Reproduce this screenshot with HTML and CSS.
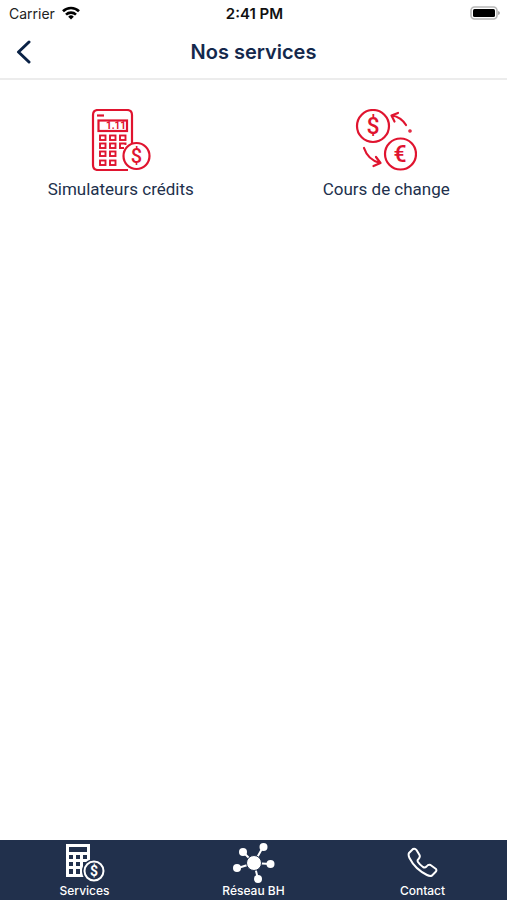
FILE: index.html
```html
<!DOCTYPE html>
<html lang="fr">
<head>
  <meta charset="UTF-8">
  <meta name="viewport" content="width=device-width, initial-scale=1.0">
  <title>Nos services</title>
  <link rel="stylesheet" href="styles.css">
</head>
<body>
  <!-- Status bar -->
  <div class="status-bar">
    <div class="carrier">
      <span>Carrier</span>
      <svg width="18" height="14" viewBox="0 0 18 14" aria-hidden="true">
        <g fill="none" stroke="#000" stroke-width="2.6">
          <path d="M1 5.3a11.4 11.4 0 0 1 16 0"/>
          <path d="M4 8.6a7.2 7.2 0 0 1 10 0"/>
        </g>
        <path d="M9 13.5 6.2 10.7a4 4 0 0 1 5.6 0z"/>
      </svg>
    </div>
    <div class="time">2:41 PM</div>
    <svg class="battery" width="30" height="14" viewBox="0 0 30 14" aria-hidden="true">
      <rect x="1" y="1" width="26" height="12" rx="3.5" fill="#fff" stroke="#b8b8b8" stroke-width="1.6"/>
      <rect x="3" y="3" width="22" height="8" rx="1.5"/>
      <path d="M28 5v4q2-.5 2-2t-2-2" fill="#aaa"/>
    </svg>
  </div>

  <!-- Header -->
  <header class="header">
    <button type="button" class="back" aria-label="Retour">
      <svg width="16" height="24" viewBox="0 0 16 24" fill="none" stroke="#0a2246" stroke-width="3" stroke-linecap="round" stroke-linejoin="round">
        <path d="M13 2 2.500 12 13 22"/>
      </svg>
    </button>
    <h1>Nos services</h1>
  </header>

  <!-- Services -->
  <main class="services">
    <a href="#credits" class="service">
      <svg width="62" height="62" viewBox="0 0 62 62" fill="none" stroke="#e0142f" stroke-width="2.2" aria-hidden="true">
        <path d="M38 61H8q-5 0-5-5V6q0-5 5-5h29q5 0 5 5v29"/>
        <path d="M7 6.500h7"/>
        <rect x="8.500" y="11.500" width="28.500" height="10.500"/>
        <g stroke-width="1.900">
          <rect x="10" y="26.500" width="5.500" height="4.500"/>
          <rect x="20" y="26.500" width="5.500" height="4.500"/>
          <rect x="30" y="26.500" width="5.500" height="4.500"/>
          <rect x="10" y="34.500" width="5.500" height="4.500"/>
          <rect x="20" y="34.500" width="5.500" height="4.500"/>
          <path d="M35.500 36v-1.500H30V39h4"/>
          <rect x="10" y="42.500" width="5.500" height="4.500"/>
          <rect x="20" y="42.500" width="5.500" height="4.500"/>
          <rect x="10" y="51.500" width="5.500" height="4.500"/>
          <rect x="20" y="51.500" width="5.500" height="4.500"/>
        </g>
        <circle cx="46.500" cy="47" r="13" fill="#fff"/>
        <text class="digits" x="26" y="20">1.11</text>
        <text class="coin-credit" x="46.500" y="54">$</text>
      </svg>
      <span>Simulateurs crédits</span>
    </a>
    <a href="#change" class="service">
      <svg width="62" height="62" viewBox="0 0 62 62" fill="none" stroke="#e0142f" stroke-width="2.2" stroke-linecap="round" stroke-linejoin="round" aria-hidden="true">
        <circle cx="18" cy="17" r="16"/>
        <circle cx="45.500" cy="45" r="15.500"/>
        <path d="M51 16Q46 8 37 6.500M43 4l-6.500 2.500 3 6"/>
        <circle cx="55" cy="22" r=".7"/>
        <path d="M9 39q4 12 16 15M21 48l4.500 6-7 3"/>
        <text class="coin" x="18" y="25">$</text>
        <text class="coin" x="45" y="53">€</text>
      </svg>
      <span>Cours de change</span>
    </a>
  </main>

  <!-- Bottom tabs -->
  <nav class="tabs">
    <a href="#services">
      <svg width="40" height="40" viewBox="0 0 40 40" aria-hidden="true">
        <path d="M1 1h24v33H1z" fill="#fff"/>
        <g fill="#21304c">
          <path d="M4 4h18v5H4z"/>
          <path d="M4 12h4v4H4zM11 12h4v4h-4zM18 12h4v4h-4zM4 19h4v4H4zM11 19h4v4h-4zM18 19h4v4h-4zM4 26h4v5H4zM11 26h4v5h-4z"/>
          <circle cx="29" cy="28" r="12"/>
        </g>
        <circle cx="29" cy="28" r="9.500" fill="none" stroke="#fff" stroke-width="2"/>
        <text class="coin-tab" x="29" y="33">$</text>
      </svg>
      <span>Services</span>
    </a>
    <a href="#reseau">
      <svg width="42" height="40" viewBox="0 0 42 40" fill="#fff" aria-hidden="true">
        <path d="M21 20 10 9M21 20l9-16M21 20 5 25M21 20l16 1M21 20l4 16" stroke="#fff" stroke-width="2"/>
        <circle cx="21" cy="20" r="7.500" stroke="#21304c"/>
        <circle cx="10" cy="9" r="4"/>
        <circle cx="30.500" cy="4" r="4"/>
        <circle cx="4" cy="25" r="4"/>
        <circle cx="37.500" cy="21" r="4"/>
        <circle cx="25" cy="36" r="4"/>
      </svg>
      <span>Réseau BH</span>
    </a>
    <a href="#contact">
      <svg width="32" height="40" viewBox="0 0 32 40" fill="none" stroke="#fff" stroke-width="2" stroke-linejoin="round" aria-hidden="true">
        <path d="M2 10 6 6q2-1 3.500 1l3 5q1 2-1 4-1.500 1-.5 3 2 3 5 5 2 1 3.500-.5 2-2.500 4-1.500l5.500 4q1 1.500-.5 3L25 32.500q-2 1-5-.5Q8 26 2.500 15 1 12 2 10z"/>
      </svg>
      <span>Contact</span>
    </a>
  </nav>
</body>
</html>
```
FILE: styles.css
```css
* {
    box-sizing: border-box;
}
body {
    display: flex;
    flex-direction: column;
    min-height: 100vh;
    margin: 0;
    background-color: #fff;
    color: #21304c;
    font-family: Inter, sans-serif;
}
a {
    color: inherit;
    text-decoration: none;
}
.status-bar {
    display: grid;
    grid-template-columns: 1fr auto 1fr;
    align-items: center;
    height: 26px;
    padding: 0 7px 0 9px;
    color: #222;
    font-size: 14px;
}
.carrier {
    display: flex;
    align-items: center;
    gap: 7px;
}
.time {
    font-weight: 600;
    font-size: 15px;
    color: #111;
}
.battery {
    justify-self: end;
}
.header {
    display: grid;
    grid-template-columns: 48px 1fr 48px;
    align-items: center;
    height: 54px;
    border-bottom: 2px solid #ececec;
}
.back {
    display: flex;
    justify-content: center;
    padding: 8px;
    background: none;
    border: none;
    cursor: pointer;
}
h1 {
    margin: 0;
    color: #14284c;
    font-size: 20px;
    font-weight: 600;
    text-align: center;
}
.services {
    display: grid;
    grid-template-columns: 1fr 1fr;
    gap: 24px;
    flex: 1;
    align-content: start;
    padding-top: 29px;
}
.service {
    display: flex;
    flex-direction: column;
    align-items: center;
    gap: 8px;
    font-family: Roboto, sans-serif;
    font-size: 17px;
    line-height: 20px;
}
svg text {
    stroke: none;
    text-anchor: middle;
    font-family: Roboto, sans-serif;
    font-weight: 500;
}
.digits {
    fill: #e0142f;
    font-size: 10px;
    font-weight: 700;
}
.coin {
    fill: #e0142f;
    font-size: 23px;
}
.coin-credit {
    fill: #e0142f;
    font-size: 20px;
}
.coin-tab {
    fill: #fff;
    font-size: 14px;
    font-weight: 700;
}
.tabs {
    display: grid;
    grid-template-columns: repeat(3, 1fr);
    height: 60px;
    background-color: #21304c;
    color: #fff;
}
.tabs a {
    display: flex;
    flex-direction: column;
    align-items: center;
    padding-top: 3px;
    font-size: 12px;
    font-weight: 500;
    line-height: 16px;
}
```
